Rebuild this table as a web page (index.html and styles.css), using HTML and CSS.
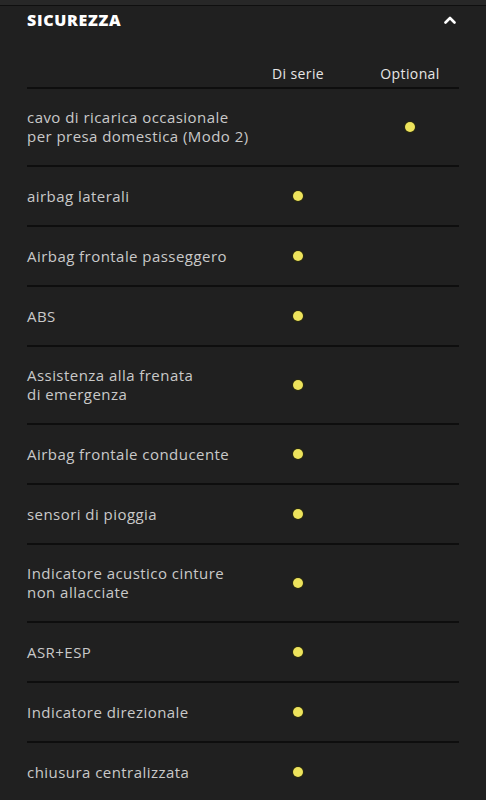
FILE: index.html
```html
<!DOCTYPE html>
<html lang="it">

<head>
    <meta charset="UTF-8">
    <meta name="viewport" content="width=device-width, initial-scale=1.0">
    <title>Sicurezza</title>
    <link rel="stylesheet" href="styles.css">
</head>

<body>
    <div class="topbar"></div>

    <section class="panel">
        <div class="panel-head">
            <h2>SICUREZZA</h2>
            <svg class="chevron" width="12" height="8" viewBox="0 0 12 8">
                <polyline points="1.5,6.5 6,2 10.5,6.5" fill="none" stroke="#fff" stroke-width="2.6" stroke-linecap="round" stroke-linejoin="round"/>
            </svg>
        </div>

        <div class="table">
            <div class="row head">
                <span class="label"></span>
                <span class="cell">Di serie</span>
                <span class="cell">Optional</span>
            </div>

            <div class="row">
                <span class="label">cavo di ricarica occasionale<br>per presa domestica (Modo 2)</span>
                <span class="cell"></span>
                <span class="cell"><i class="dot"></i></span>
            </div>
            <div class="row">
                <span class="label">airbag laterali</span>
                <span class="cell"><i class="dot"></i></span>
                <span class="cell"></span>
            </div>
            <div class="row">
                <span class="label">Airbag frontale passeggero</span>
                <span class="cell"><i class="dot"></i></span>
                <span class="cell"></span>
            </div>
            <div class="row">
                <span class="label">ABS</span>
                <span class="cell"><i class="dot"></i></span>
                <span class="cell"></span>
            </div>
            <div class="row">
                <span class="label">Assistenza alla frenata<br>di emergenza</span>
                <span class="cell"><i class="dot"></i></span>
                <span class="cell"></span>
            </div>
            <div class="row">
                <span class="label">Airbag frontale conducente</span>
                <span class="cell"><i class="dot"></i></span>
                <span class="cell"></span>
            </div>
            <div class="row">
                <span class="label">sensori di pioggia</span>
                <span class="cell"><i class="dot"></i></span>
                <span class="cell"></span>
            </div>
            <div class="row">
                <span class="label">Indicatore acustico cinture<br>non allacciate</span>
                <span class="cell"><i class="dot"></i></span>
                <span class="cell"></span>
            </div>
            <div class="row">
                <span class="label">ASR+ESP</span>
                <span class="cell"><i class="dot"></i></span>
                <span class="cell"></span>
            </div>
            <div class="row">
                <span class="label">Indicatore direzionale</span>
                <span class="cell"><i class="dot"></i></span>
                <span class="cell"></span>
            </div>
            <div class="row">
                <span class="label">chiusura centralizzata</span>
                <span class="cell"><i class="dot"></i></span>
                <span class="cell"></span>
            </div>
        </div>
    </section>
</body>

</html>
```

FILE: styles.css
```css
* {
    margin: 0;
    padding: 0;
    box-sizing: border-box;
}

body {
    background-color: #202020;
    font-family: "Open Sans", Lato, sans-serif;
    color: #c9c9c9;
    overflow: hidden;
}

.topbar {
    height: 6px;
    background-color: #272727;
    border-bottom: 1px solid #0f0f0f;
}

.panel {
    padding: 0 27px;
}

.panel-head {
    display: flex;
    align-items: center;
    justify-content: space-between;
    height: 27px;
    padding-right: 3px;
}

.panel-head h2 {
    font-size: 16px;
    font-weight: 800;
    color: #fff;
    letter-spacing: 0.7px;
}

.table {
    margin-top: 31px;
}

.row {
    display: grid;
    grid-template-columns: minmax(0, 1fr) 110px 98px;
    column-gap: 8px;
    align-items: stretch;
    min-height: 60px;
    border-bottom: 2px solid #0e0e0e;
    font-size: 15px;
    line-height: 19px;
    letter-spacing: 0.45px;
}

.row.head {
    min-height: 0;
    color: #e6e6e6;
    font-size: 14px;
    letter-spacing: 0.4px;
    padding-bottom: 4px;
}

.row.head .cell {
    margin: 0;
}

.label {
    display: flex;
    align-items: center;
    padding: 19px 0;
    white-space: nowrap;
}

.row.head .label {
    padding: 0;
}

.cell {
    display: flex;
    align-items: center;
    justify-content: center;
    margin: 6px 0;
}

.dot {
    width: 10px;
    height: 10px;
    border-radius: 50%;
    background-color: #ede35c;
    box-shadow: 0 0 0 1px #2a2a10;
}
```
